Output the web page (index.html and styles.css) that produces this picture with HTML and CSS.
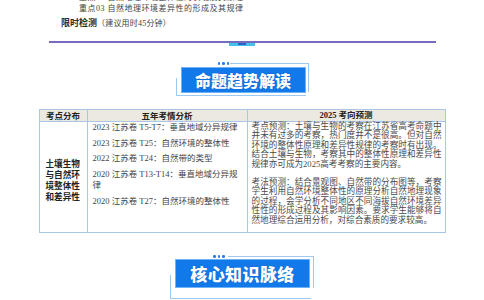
FILE: index.html
```html
<!DOCTYPE html>
<html lang="zh-CN">
<head>
<meta charset="utf-8">
<title>命题趋势解读</title>
<link rel="stylesheet" href="styles.css">
</head>
<body>
<div class="page">
  <div class="intro">
    <p class="cut">重点<span class="num">02</span> 自然地理环境整体性的表现及其原理</p>
    <p class="l1">重点<span class="num">03</span> 自然地理环境差异性的形成及其规律</p>
    <p class="l2"><b>限时检测</b>（建议用时<span class="num">45</span>分钟）</p>
  </div>
  <div class="rule"></div>
  <div class="tab"><span></span></div>

  <div class="banner b1">
    <span class="dots"><i></i><i></i><i></i></span>
    <span class="frame-tr"></span>
    <span class="frame-bl"></span>
    <div class="box">命题趋势解读</div>
  </div>

  <table class="grid">
    <colgroup>
      <col class="c1"><col class="c2"><col class="c3">
    </colgroup>
    <thead>
      <tr>
        <th class="h-sans">考点分布</th>
        <th class="h-sans">五年考情分析</th>
        <th class="h-serif">2025 考向预测</th>
      </tr>
    </thead>
    <tbody>
      <tr class="body">
        <td class="topic">土壤生物与自然环境整体性和差异性</td>
        <td class="hist">
          <p>2023 江苏卷 T5-T7：垂直地域分异规律</p>
          <p>2023 江苏卷 T25：自然环境的整体性</p>
          <p>2022 江苏卷 T24：自然带的类型</p>
          <p>2020 江苏卷 T13-T14：垂直地域分异规律</p>
          <p>2020 江苏卷 T27：自然环境的整体性</p>
        </td>
        <td class="pred">
          <p>考点预测：土壤与生物的考察在江苏省高考命题中并未有过多的考察，热门度并不是很高。但对自然环境的整体性原理和差异性规律的考察时有出现。结合土壤与生物，考察其中的整体性原理和差异性规律亦可成为2025高考考察的主要内容。</p>
          <p>考法预测：结合景观图、自然带的分布图等，考察学生利用自然环境整体性的原理分析自然地理现象的过程，会学分析不同地区不同海拔自然环境差异性性的形成过程及其影响因素。要求学生能够将自然地理综合运用分析，对综合素质的要求较高。</p>
        </td>
      </tr>
    </tbody>
  </table>

  <div class="banner b2">
    <span class="dots"><i></i><i></i><i></i></span>
    <span class="frame-tr"></span>
    <span class="frame-bl"></span>
    <div class="box">核心知识脉络</div>
  </div>
</div>
</body>
</html>
```

FILE: styles.css
```css
html, body {
  margin: 0;
  padding: 0;
  background: #ffffff;
}

body {
  width: 484px;
  height: 300px;
  overflow: hidden;
  font-family: "Liberation Serif", "Noto Sans CJK SC", serif;
  color: #3c3c3c;
}

.page {
  width: 484px;
}

p {
  margin: 0;
}

/* ---------- intro lines ---------- */
.intro {
  margin-top: -7px;
  font-family: "Liberation Serif", "Noto Sans CJK SC", serif;
  font-size: 8px;
  color: #444444;
}

.intro .cut {
  height: 9px;
  line-height: 9px;
  padding-left: 79px;
  letter-spacing: 0.5px;
}

.intro .l1 {
  height: 14px;
  line-height: 14px;
  padding-left: 79px;
  letter-spacing: 0.5px;
}

.intro .l2 {
  height: 14px;
  line-height: 14px;
  padding-left: 61px;
  letter-spacing: 0.2px;
}

.intro .l2 b {
  font-family: "Noto Sans CJK SC", sans-serif;
  font-weight: 700;
  font-size: 9px;
  letter-spacing: 0;
  color: #2a2a2a;
}

.num {
  font-family: "Liberation Serif", serif;
}

/* ---------- rule with ornament ---------- */
.rule {
  width: 387px;
  height: 2px;
  margin: 11px auto 0;
  background: #766cbf;
}

.tab {
  width: 26px;
  height: 3px;
  margin: 0 auto;
  background: #46c2ea;
  display: flex;
  justify-content: center;
}

.tab span {
  width: 8px;
  height: 2px;
  background: #2b63c9;
}

/* ---------- banners ---------- */
.banner {
  position: relative;
  box-sizing: border-box;
  margin-left: auto;
  margin-right: auto;
}

.b1 {
  width: 133px;
  margin-top: 15px;
  padding: 6px 3px 4px 5px;
}

.b2 {
  width: 144px;
  margin-top: 22px;
  padding: 4px 4px 12px 5px;
}

.banner .box {
  background: #1279ea;
  border: 1px solid #6fb3f6;
  color: #ffffff;
  font-family: "Noto Sans CJK SC", sans-serif;
  font-weight: 900;
  text-align: center;
  text-shadow: 0 0 1px rgba(0, 40, 120, 0.5);
}

.b1 .box {
  height: 24px;
  line-height: 24px;
  font-size: 16px;
}

.b2 .box {
  height: 27px;
  line-height: 27px;
  font-size: 17px;
  letter-spacing: 0.4px;
}

.dots {
  position: absolute;
  top: 1px;
  left: 42px;
  display: flex;
  gap: 2px;
}

.b2 .dots {
  left: 43px;
  top: 0;
}

.dots i {
  display: block;
  width: 2.5px;
  height: 2.5px;
  border-radius: 50%;
  background: #2c7fe2;
}

.frame-tr {
  position: absolute;
  top: 2px;
  left: 54px;
  right: 0;
  bottom: 5px;
  border-top: 1px solid #9dc9f0;
  border-right: 1px solid #9dc9f0;
}

.b2 .frame-tr {
  top: 1px;
  left: 58px;
  bottom: 12px;
}

.frame-bl {
  position: absolute;
  top: 17px;
  left: 0;
  right: 3px;
  bottom: 1px;
  border-left: 1px solid #9dc9f0;
  border-bottom: 1px solid #9dc9f0;
}

.b2 .frame-bl {
  top: 20px;
  bottom: 1px;
}

/* ---------- table ---------- */
.grid {
  width: 406px;
  margin: 12px auto 0;
  border-collapse: collapse;
  table-layout: fixed;
}

.grid col.c1 { width: 48px; }
.grid col.c2 { width: 160px; }
.grid col.c3 { width: 198px; }

.grid th,
.grid td {
  border: 1px solid #a9c6e5;
  padding: 0;
}

.grid th {
  height: 11px;
  line-height: 11px;
  background: #ece9e1;
  font-size: 8.5px;
  font-weight: 700;
  color: #222222;
  text-align: center;
}

.h-sans {
  font-family: "Noto Sans CJK SC", sans-serif;
}

.h-serif {
  font-family: "Liberation Serif", "Noto Sans CJK SC", serif;
}

.grid .body td {
  height: 90px;
  vertical-align: top;
}

.grid td.topic {
  vertical-align: middle;
  padding: 6px 5px 0 6px;
  font-family: "Noto Sans CJK SC", sans-serif;
  font-weight: 700;
  font-size: 8.6px;
  line-height: 11px;
  color: #222222;
}

.hist {
  font-size: 8.5px;
  line-height: 11.5px;
  color: #444444;
}

.grid td.hist {
  padding: 0 5px;
}

.hist p {
  margin-bottom: 4px;
}

.grid td.pred {
  padding: 0 3px 7px 4px;
  font-size: 8.6px;
  line-height: 9.4px;
  color: #4a4a4a;
}

.pred p {
  width: 190px;
  text-align: justify;
}

.pred p + p {
  margin-top: 9px;
}
```
